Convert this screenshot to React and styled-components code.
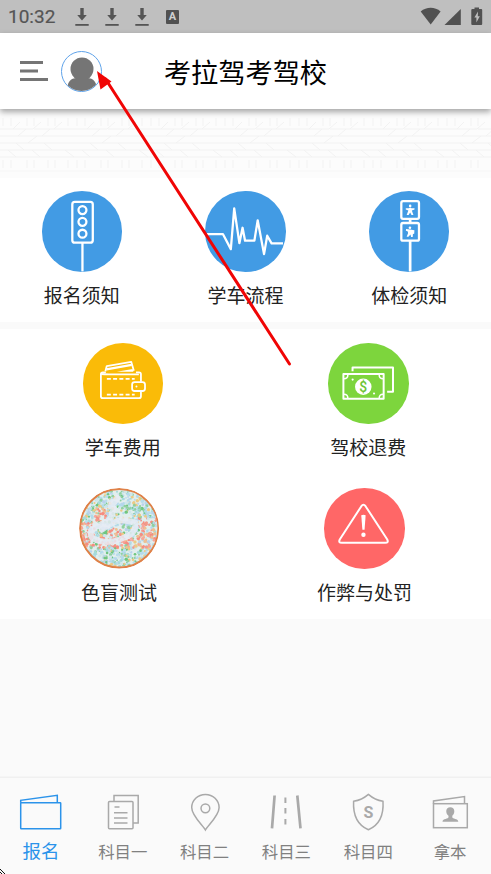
import React from 'react'
import styled, { createGlobalStyle } from 'styled-components'

const GlobalStyle = createGlobalStyle`
    * {
        box-sizing: border-box;
    }

    body {
        margin: 0;
        background: #fafafa;
        font-family: Roboto, "Noto Sans CJK SC", sans-serif;
        overflow: hidden;
    }

    svg {
        display: block;
        flex-shrink: 0;
    }
`

const DownloadIcon = () => (
  <svg width="14" height="18" viewBox="0 0 14 18" fill="#555">
    <path d="M5.3 0h3.4v7h3.1L7 12.4 2.200 7h3.100z" />
    <rect x="0.300" y="16" width="13.400" height="1.800" />
  </svg>
)

const StatusIcons = () => (
  <svg width="64" height="19" viewBox="0 0 64 19" fill="#515151">
    <path d="M0.700 4.600C6.500-0.400 14.800-0.400 20.600 4.600L10.700 17.500z" />
    <path d="M40.800 2v16H24.500z" />
    <path d="M54.500 0.500h4.500v1.600h2.200a1 1 0 011 1V17a1 1 0 01-1 1h-8.900a1 1 0 01-1-1V3.100a1 1 0 011-1h2.200z" />
    <path d="M58 4.500l-3.600 6h2v5l3.400-6.300h-2z" fill="#bfbfbf" />
  </svg>
)

const MenuIcon = () => (
  <svg width="28" height="20" viewBox="0 0 28 20" fill="#757575">
    <rect y="0" width="23" height="3" />
    <rect y="8.500" width="18" height="3" />
    <rect y="17" width="28" height="3" />
  </svg>
)

const TrafficLight = () => (
  <DiscSvg>
    <rect x="30.500" y="11" width="20.600" height="41" rx="2.500" />
    <circle cx="40.700" cy="19.200" r="4" />
    <circle cx="40.700" cy="31" r="4" />
    <circle cx="40.700" cy="43" r="4" />
    <path d="M40.700 52v29" />
  </DiscSvg>
)

const Pulse = () => (
  <DiscSvg>
    <path d="M2 43.300H18L26 58.500L29.400 17.500L34.600 52.500L37.800 37L40.300 50H49.700L53 29.500L59.400 63.500L62.600 45L67 52.700H78.500" />
  </DiscSvg>
)

const Signpost = () => (
  <DiscSvg>
    <rect x="32.500" y="10.200" width="17.800" height="17.800" rx="1.800" />
    <rect x="32.500" y="32.200" width="17.800" height="17.800" rx="1.800" />
    <path d="M41.400 28v4M41.400 50v31" strokeWidth="2.700" />
    <g fill="#fff" stroke="none">
      <circle cx="41.400" cy="15" r="1.300" />
      <path d="M37 17.300h3l1.400-.6 1.400.6h3v1.300l-2.700 1.100 1.600 4.500h-1.900l-1.400-2.500-1.500 2.500h-2l1.700-4.500-2.600-1.100z" />
      <circle cx="41.200" cy="36.900" r="1.300" />
      <path d="M37.300 38.300l4.100.5 4.300.8-.2 3.400-1.300.2-.2 3h-1.600l-.7-2.400-2 2.200h-1.800l1.500-3.700-.6-1.700-1.700-.6z" />
    </g>
  </DiscSvg>
)

const Wallet = () => (
  <DiscSvg $stroke={1.8}>
    <path d="M22.500 28.500l1.400-5.300L48.500 18.900l2.700 9" />
    <path d="M23.500 26.500l25.500-4.500" strokeWidth="2.200" />
    <path d="M34 29l16-2.800.7 2.800z" fill="#fff" stroke="none" />
    <path d="M58.300 39V31.500q0-2-2-2h-3M23 29.500h-3q-2 0-2 2V53.500q0 2 2 2h36.300q2 0 2-2v-5" />
    <path d="M18.200 31.200q3 .3 8 .3h30" />
    <rect x="49.400" y="39.300" width="13" height="9" rx="2.500" />
    <path d="M24 36.200h28M24 52h28" strokeDasharray="4 2.300" />
    <circle cx="53.800" cy="43.800" r="1" fill="#fff" stroke="none" />
  </DiscSvg>
)

const Banknotes = () => (
  <DiscSvg $stroke={2}>
    <path d="M24.700 28.500V24.600H65.400V49H59.500" />
    <rect x="15.500" y="31.300" width="40.500" height="24.800" />
    <path d="M16 36q4 0 4-4M55.500 36q-4 0-4-4M16 51.500q4 0 4 4M55.500 51.500q-4 0-4 4" strokeWidth="1.500" />
    <circle cx="35.500" cy="44" r="8.300" fill="#fff" stroke="none" />
    <circle cx="24.800" cy="36.800" r="1.100" fill="#fff" stroke="none" />
    <circle cx="46.300" cy="50.800" r="1.100" fill="#fff" stroke="none" />
    <text x="35.500" y="49" textAnchor="middle" fontSize="14" fontWeight="500" fill="#6dc534" stroke="none">$</text>
  </DiscSvg>
)

const Warning = () => (
  <DiscSvg $stroke={2}>
    <path d="M37.600 18.300q2.100-3 4.200 0L63.500 51.500q2 3.700-2 3.700H18q-4 0-2-3.700z" />
    <path d="M37.500 27.300q2.200-1 4.400 0L40.800 42h-2.200z" fill="#fff" stroke="none" />
    <circle cx="39.700" cy="47" r="2.200" fill="#fff" stroke="none" />
  </DiscSvg>
)

// Fixed seed so the plate keeps the same speckles on each render
const makeDots = () => {
  let seed = 17
  const rand = () => {
    seed = (seed * 16807) % 2147483647
    return seed / 2147483647
  }
  const cool = ['#a6dadb', '#b9ddec', '#6fc67f', '#b2daeb', '#cfe6ea', '#8fd0a0', '#ecca85', '#b9d2ec']
  const warm = ['#f58c80', '#f8a598', '#f29a8a', '#edc092']
  const dots = []
  for (let i = 0; i < 1100; i++) {
    const x = 2 + rand() * 77
    const y = 2 + rand() * 77
    const isWarm = (y > 49 && y < 60 && x < 72) || (x < 16 && y > 34 && y < 60) ||
      (x > 59 && y > 30 && y < 55) || (x > 15 && x < 27 && y > 20 && y < 34) || (y > 40 && y < 49 && x > 28 && x < 44)
    const palette = isWarm && rand() < 0.75 ? warm : cool
    dots.push({ x, y, r: 0.9 + rand() * 0.9, color: palette[Math.floor(rand() * palette.length)] })
  }
  return dots
}

const dots = makeDots()

const ColorPlate = () => (
  <DiscSvg>
    <defs>
      <clipPath id="plate"><circle cx="40.500" cy="40.500" r="39.500" /></clipPath>
    </defs>
    <circle cx="40.500" cy="40.500" r="39" fill="#e2eeed" stroke="none" />
    <g clipPath="url(#plate)">
      <g stroke="none">
        {dots.map((d, i) => <circle key={i} cx={d.x} cy={d.y} r={d.r} fill={d.color} />)}
      </g>
      <path d="M39 10L32 19M33 14Q37 28 28 34L17 39Q8 43 14 51Q29 58 45 50Q57 47 57 35L43 32Q33 34 23 42" stroke="#e6ebf4" strokeWidth="6" strokeLinecap="round" opacity="0.850" />
    </g>
    <circle cx="40.500" cy="40.500" r="39.400" stroke="#df8148" strokeWidth="2" />
  </DiscSvg>
)

// Faint tyre track under the header
const TyreTrack = () => (
  <svg width="491" height="69" fill="none" stroke="#f2f2f2">
    <defs>
      <pattern id="tread" width="74" height="69" patternUnits="userSpaceOnUse">
        <path d="M0 20h13l7-7M13 20h20l8-7M34 20h20l8-7M54 20h20" />
        <path d="M0 27h18l8-7M18 27h24l8-7M42 27h32M0 34h28l9-7M28 34h46M0 41h24l-8-7M24 41h50M52 41l-8-7" />
        <path d="M0 48h16l-8-7M16 48h24l-8-7M40 48h34l-9-7" />
        <path d="M3 9v8M11 9v8M27 9v8M34 9v8M48 9v8M55 9v8M68 9v8" />
        <path d="M3 51v8M11 51v8M27 51v8M34 51v8M48 51v8M55 51v8M68 51v8" />
        <path d="M0 62h74" stroke="#f6f6f6" />
      </pattern>
    </defs>
    <rect width="491" height="69" fill="url(#tread)" stroke="none" />
  </svg>
)

const FolderIcon = () => (
  <TabSvg>
    <path d="M1.700 12.700V10.300L38.300 5.300V12.700" />
    <rect x="1.700" y="12.700" width="40" height="26" rx="0.500" />
  </TabSvg>
)

const PagesIcon = () => (
  <TabSvg>
    <rect x="7.500" y="11.500" width="24.500" height="27.300" rx="1" />
    <path d="M13 11.500V5.500H37.200V33H32M13.500 17h5M13 22.700h13.500M13 28h13.500M13 33h13.500" />
  </TabSvg>
)

const PinIcon = () => (
  <TabSvg>
    <path d="M22.400 40C20 35.500 8.700 26 8.700 17.600a13.700 13.200 0 0127.400 0C36.100 26 24.800 35.500 22.400 40z" />
    <circle cx="22.400" cy="18.300" r="4.400" />
  </TabSvg>
)

const RoadIcon = () => (
  <TabSvg>
    <path d="M10.600 5.500L8 38.300M33.300 5.500L36.500 38.300" strokeWidth="2.700" />
    <path d="M21.400 7.500v5.500M21.400 18v5.500M21.400 29v5.500" strokeWidth="2" />
  </TabSvg>
)

const ShieldIcon = () => (
  <TabSvg>
    <path d="M22.400 4.400Q16 10 7.600 11.300Q6.500 33 22.400 39.800Q38.300 33 37 11.300Q28.800 10 22.400 4.400z" />
    <text x="22.400" y="27.800" textAnchor="middle" fontSize="16" fontWeight="700" fill="currentColor" stroke="none">S</text>
  </TabSvg>
)

const LicenceIcon = () => (
  <TabSvg>
    <path d="M5.500 13.700V11L36.500 6.500V13.700" />
    <rect x="5.500" y="13.700" width="33.800" height="24" />
    <path d="M22.300 17.300c5 0 5 6.200 2 8.500v1.500c0 1.800 5.700 1.200 6 4.400H14.500c.3-3.200 6-2.600 6-4.400v-1.500c-3.200-2.300-3.200-8.500 1.800-8.500z" fill="currentColor" stroke="none" />
  </TabSvg>
)

const tabs = [
  { label: '报名', icon: FolderIcon, active: true },
  { label: '科目一', icon: PagesIcon },
  { label: '科目二', icon: PinIcon },
  { label: '科目三', icon: RoadIcon },
  { label: '科目四', icon: ShieldIcon },
  { label: '拿本', icon: LicenceIcon },
]

const Entry = ({ label, color, icon: Icon }) => (
  <EntryItem>
    <Disc $color={color}><Icon /></Disc>
    <EntryLabel>{label}</EntryLabel>
  </EntryItem>
)

const App = () => {
  return (
    <Screen>
      <GlobalStyle />
      <StatusBar>
        <Clock>10:32</Clock>
        <Notices>
          <DownloadIcon />
          <DownloadIcon />
          <DownloadIcon />
          <LetterBadge>A</LetterBadge>
        </Notices>
        <StatusIcons />
      </StatusBar>
      <Header>
        <HeaderLeft>
          <MenuIcon />
          <Avatar>
            <svg width="39" height="39" viewBox="0 0 39 39" fill="#757575">
              <circle cx="20" cy="17" r="11.500" />
              <path d="M5 39q0-13 10-13h10q10 0 10 13z" />
            </svg>
          </Avatar>
        </HeaderLeft>
        <Title>考拉驾考驾校</Title>
      </Header>
      <Banner><TyreTrack /></Banner>
      <Guides>
        <Entry label="报名须知" color="#429be4" icon={TrafficLight} />
        <Entry label="学车流程" color="#429be4" icon={Pulse} />
        <Entry label="体检须知" color="#429be4" icon={Signpost} />
      </Guides>
      <Services>
        <ServiceRow>
          <Entry label="学车费用" color="#fabb08" icon={Wallet} />
          <Entry label="驾校退费" color="#7dd53d" icon={Banknotes} />
        </ServiceRow>
        <ServiceRow>
          <Entry label="色盲测试" color="transparent" icon={ColorPlate} />
          <Entry label="作弊与处罚" color="#ff6767" icon={Warning} />
        </ServiceRow>
      </Services>
      <TabBar>
        {tabs.map(({ label, icon: Icon, active }) => (
          <Tab key={label} $active={active}>
            <Icon />
            <TabLabel $active={active}>{label}</TabLabel>
          </Tab>
        ))}
      </TabBar>
      <Pointer width="200" height="304" viewBox="0 0 200 304">
        <path d="M10.500 13L194.500 298" stroke="#f00505" strokeWidth="3" strokeLinecap="round" />
        <path d="M2 5L5.500 23.500L16.500 15.500z" fill="#f00505" />
      </Pointer>
      <Cursor width="5" height="5" viewBox="0 0 5 5">
        <path d="M0 0h1v1h1v1h1v1h1v1h1v1h-1v-1h-1v-1h-1v-1h-1v-1h-1zM0 3h1v1h1v1h-1v-1h-1z" fill="#111" />
      </Cursor>
    </Screen>
  )
}

const Screen = styled.div`
    position: relative;
    display: flex;
    flex-direction: column;
    width: 491px;
    height: 874px;
    background: #fafafa;
    overflow: hidden;
`

const StatusBar = styled.div`
    display: flex;
    align-items: center;
    height: 33px;
    padding: 0 7px 0 8px;
    background: #bfbfbf;
`

const Clock = styled.span`
    width: 67px;
    padding-top: 1px;
    font-size: 19px;
    line-height: 22px;
    color: #555;
    -webkit-text-stroke: 0.2px #555;
`

const Notices = styled.div`
    display: flex;
    align-items: center;
    flex: 1;
    gap: 16px;
    padding-top: 1px;
`

const LetterBadge = styled.span`
    width: 13px;
    height: 14px;
    margin-left: 1px;
    border-radius: 1px;
    background: #515151;
    color: #cfcfcf;
    font-size: 11px;
    font-weight: 700;
    line-height: 14px;
    text-align: center;
`

const Header = styled.header`
    z-index: 1;
    display: grid;
    grid-template-columns: 1fr auto 1fr;
    align-items: center;
    height: 76px;
    padding: 0 20px;
    background: #fff;
    box-shadow: 0 3px 6px rgba(0, 0, 0, 0.35);
`

const HeaderLeft = styled.div`
    display: flex;
    align-items: center;
    gap: 13px;
`

const Avatar = styled.div`
    width: 41px;
    height: 41px;
    border: 1px solid #5fa3ea;
    border-radius: 50%;
    overflow: hidden;
`

const Title = styled.h1`
    margin: 0;
    padding-top: 5px;
    font-size: 27.2px;
    font-weight: 400;
    line-height: 40px;
    color: #000;
`

const Banner = styled.div`
    height: 69px;
    background: #fcfcfc;
`

const Guides = styled.section`
    display: grid;
    grid-template-columns: repeat(3, 1fr);
    justify-items: center;
    height: 144px;
    padding-top: 13px;
    background: #fff;
`

const Services = styled.section`
    display: flex;
    flex-direction: column;
    height: 290px;
    margin-top: 7px;
    padding-top: 14px;
    background: #fff;
`

const ServiceRow = styled.div`
    display: flex;
    flex-shrink: 0;
    justify-content: space-around;
    height: 145px;
`

const EntryItem = styled.div`
    display: flex;
    flex-direction: column;
    align-items: center;
`

const Disc = styled.div`
    width: 80.5px;
    height: 80.5px;
    border-radius: 50%;
    background: ${({ $color }) => $color};
    overflow: hidden;
`

const DiscSvg = styled.svg.attrs({ viewBox: '0 0 81 81' })`
    width: 100%;
    height: 100%;
    fill: none;
    stroke: #fff;
    stroke-width: ${({ $stroke = 2.3 }) => $stroke}px;
    stroke-linejoin: round;
`

const EntryLabel = styled.span`
    margin-top: 11.5px;
    font-size: 19px;
    line-height: 28px;
    color: #222;
    white-space: nowrap;
`

const TabBar = styled.nav`
    display: grid;
    grid-template-columns: repeat(6, 1fr);
    height: 97px;
    margin-top: auto;
    padding-top: 12px;
    border-top: 1px solid #f0f0f0;
    background: #fafafa;
    box-shadow: 0 -1px 1px rgba(0, 0, 0, 0.02);
`

const Tab = styled.div`
    display: flex;
    flex-direction: column;
    align-items: center;
    color: ${({ $active }) => ($active ? '#2b93ea' : '#a9a9a9')};
`

const TabSvg = styled.svg.attrs({ viewBox: '0 0 44 44' })`
    width: 44px;
    height: 44px;
    fill: none;
    stroke: currentColor;
    stroke-width: 1.5px;
`

const TabLabel = styled.span`
    margin-top: 5px;
    font-size: ${({ $active }) => ($active ? '18.5px' : '16.4px')};
    line-height: 27px;
    color: ${({ $active }) => ($active ? '#2b93ea' : '#808080')};
`

// Annotation drawn over the page
const Pointer = styled.svg`
    position: absolute;
    z-index: 2;
    left: 95px;
    top: 66px;
`

const Cursor = styled.svg`
    position: absolute;
    z-index: 2;
    left: 0;
    bottom: 0;
`

export default App
